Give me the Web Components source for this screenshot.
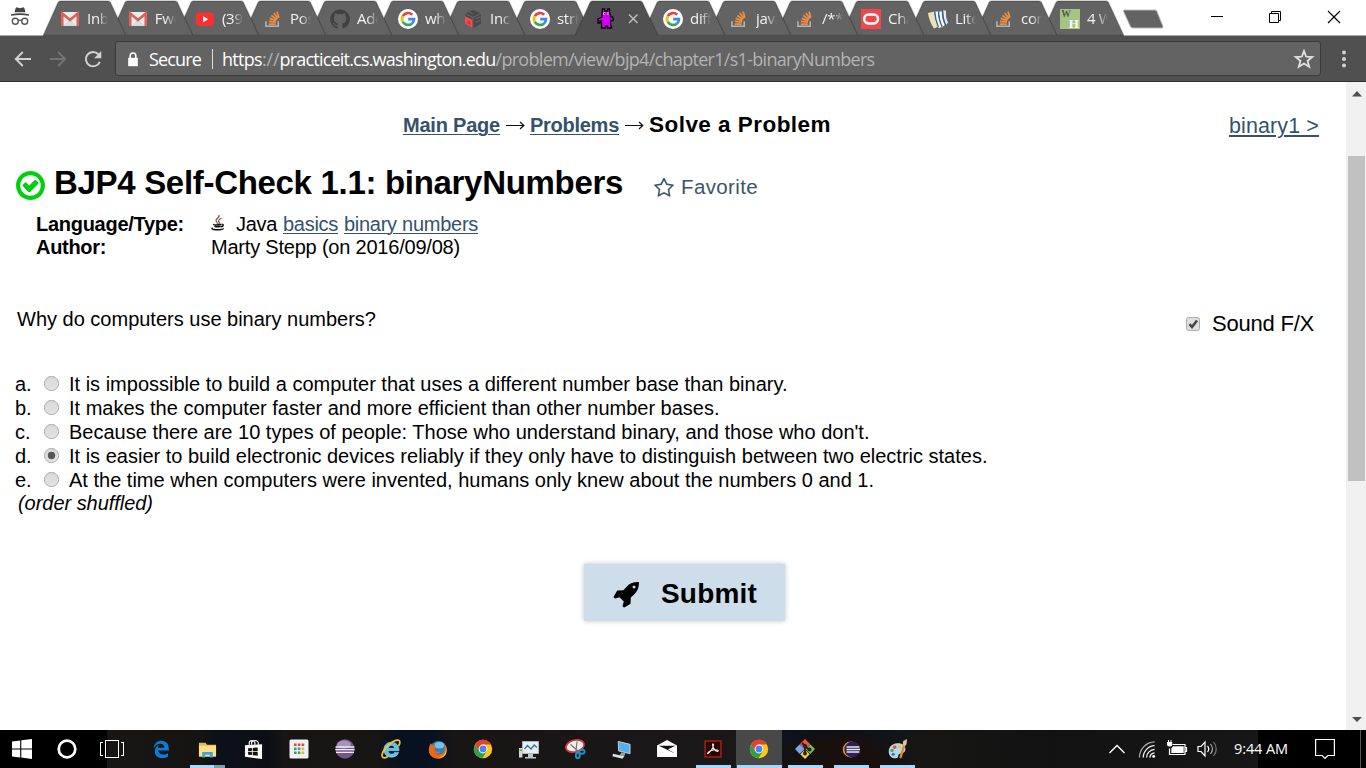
<!DOCTYPE html>
<html lang="en">
<head>
<meta charset="utf-8">
<title>BJP4 Self-Check 1.1: binaryNumbers</title>
<style>
html,body{margin:0;height:100%;overflow:hidden;background:#fff}
</style>
</head>
<body>
<app-screen></app-screen>
<script>
const stack = '<g transform="translate(1.7 2) scale(.82)"><path d="M1.5 12.500V18.500h15V12.500" fill="none" stroke="#b4b4b4" stroke-width="1.900"/><g stroke="#ee8e3f" stroke-width="2.100"><path d="M5 16h8.500M5.200 12.600l8.400 1M6 9l8.100 2.800M8 5.400l7 4.800M11 2.500l5.200 6.500M15 .5l2.300 7.700"/></g></g>';
const google = '<circle cx="10" cy="10" r="10" fill="#fff"/><g fill="none" stroke-width="2.700"><path d="M14.200 5.700A6 6 0 0 0 4.800 7.100" stroke="#ea4335"/><path d="M4.800 7.100a6 6 0 0 0 0 5.800" stroke="#fbbc05"/><path d="M4.800 12.900a6 6 0 0 0 9.200 1.500" stroke="#34a853"/><path d="M14 14.400a6 6 0 0 0 2-4.200h-5.800" stroke="#4285f4"/></g>';
const gmail = '<rect x="1" y="3" width="18" height="14" rx="1.300" fill="#eee"/><path d="M3 17l7-7 7 7z" fill="#ddd"/><path d="M2.300 17V4.500L10 11l7.700-6.500V17" fill="none" stroke="#de5f55" stroke-width="2.500"/>';
const chrome = '<circle cx="10" cy="10" r="9.200" fill="#fbc916"/><path d="M2 5.400A9.200 9.200 0 0 0 9.400 19.200L14 12 6.200 12z" fill="#30a04f"/><path d="M2 5.400A9.200 9.200 0 0 1 18 5.500H10L6 12z" fill="#e34133"/><circle cx="10" cy="10" r="4.400" fill="#fff"/><circle cx="10" cy="10" r="3.400" fill="#4a86ee"/>';
const ICONS = {
  stack, google, gmail, chrome,
  youtube:'<rect x="1" y="3.500" width="18" height="13.500" rx="3.400" fill="#fb3030"/><path d="M8.200 7.200v6l5-3z" fill="#fff"/>',
  github:'<path d="M10 .4A9.800 9.800 0 0 0 6.900 19.500c.5.100.7-.2.700-.5v-1.900c-2.700.6-3.300-1.100-3.300-1.100-.5-1.100-1.100-1.400-1.100-1.400-.9-.6.1-.6.1-.6 1 .1 1.500 1 1.500 1 .9 1.500 2.300 1.100 2.900.8.1-.6.3-1.100.6-1.300-2.200-.3-4.500-1.100-4.500-4.900 0-1.100.4-2 1-2.600-.1-.3-.5-1.300.1-2.700 0 0 .8-.3 2.700 1a9 9 0 0 1 4.900 0c1.900-1.300 2.700-1 2.700-1 .6 1.400.2 2.400.1 2.700.6.6 1 1.500 1 2.600 0 3.800-2.300 4.600-4.500 4.900.4.3.7.9.7 1.800V19c0 .3.2.6.7.5A9.800 9.800 0 0 0 10 .4z" fill="#414141"/>',
  cube:'<path d="M10 .7L18 4.700v10.100L10 19.300 2 14.800V4.700z" fill="#484848"/><path d="M2 7.200l7.500 3.600v8.300L2 14.800z" fill="#ee4b55"/><path d="M2.200 4.800L10 8.600 18 4.600M10 8.800v10.300M6.300 2.900l4 2M12.500 10l5-2.300M12.500 13.200l5-2.300" stroke="#656565" stroke-width="1.100" fill="none"/><path d="M4.500 11.200l3 1.400v3.500l-3-1.700z" fill="#c93944"/>',
  critter:'<path d="M6.500 0h2v2h3V0h2v5h1v3h2l1 3-2 1-1-1v4l1 4h-4v-2h-2v2h-4v-7H4v2H2v-4l4-2V5z" fill="#d600f5" stroke="#0b000d" stroke-width="1.300"/><path d="M7.200 3.500h2v2h-2zM11 3.500h2v2h-2z" fill="#eee"/><path d="M8 4h1v1H8zM11.500 4h1v1h-1z" fill="#000"/>',
  oracle:'<rect width="20" height="20" fill="#ee484e"/><rect x="3.200" y="5.600" width="13.800" height="8.800" rx="4.300" fill="none" stroke="#fff" stroke-width="2.500"/>',
  books:'<path d="M0 4l6.500-1.500Q6.500 9 10.500 17.500L6 19.500Q1 12 0 4z" fill="#eee3b8"/><path d="M7 2.500h3.200q0 7.500 4 15.500L10.500 19Q7 10 7 2.500z" fill="#f4f7fb"/><path d="M10.800 2.500h3q0 7.500 3 13.500l-2.800 2.500Q10.800 10 10.800 2.500z" fill="#fff"/><path d="M15 1.500h3q-.5 8 2 12l-2.500 3Q14.500 9 15 1.500z" fill="#e6eff8"/><path d="M6.800 2.500Q7 10 10.300 18M10.600 2.400q0 8 3.600 15.500M14.600 2q-.2 7 3 14" stroke="#2e5d96" stroke-width="1.300" fill="none"/>',
  wh:'<rect width="20" height="20" fill="#a3c583"/><text x="1.200" y="8.300" font-family="Liberation Serif,serif" font-weight="700" font-size="9.500" fill="#505b49">W</text><text x="8.800" y="18.800" font-family="Liberation Serif,serif" font-weight="700" font-size="13" fill="#fff">H</text>',
  incognito:'<path d="M5.500 1.500l1-1.200 3.500 1 3.500-1 1 1.200 1 3.700H4.500zM1 7.200q9-2 18 0v1.500q-9-1.500-18 0z" fill="#444"/><g fill="none" stroke="#555" stroke-width="1.400"><circle cx="5.300" cy="14.300" r="3"/><circle cx="14.700" cy="14.300" r="3"/><path d="M8.200 13.600q1.800-1 3.600 0"/></g>',
  back:'<path d="M18 10H3M9.800 3l-7 7 7 7" fill="none" stroke="#d2d2d2" stroke-width="1.900"/>',
  fwd:'<path d="M2 10H17M10.200 3l7 7-7 7" fill="none" stroke="#747474" stroke-width="1.900"/>',
  reload:'<path d="M16.800 12.800A7.200 7.200 0 1 1 15.400 5.200l1.200 1.500" fill="none" stroke="#d2d2d2" stroke-width="2"/><path d="M18.300 2v7.200h-7.200z" fill="#d2d2d2"/>',
  lock:'<path d="M4 8.500h12V19H4z" fill="#fff"/><path d="M6.500 9V6a3.500 3.500 0 0 1 7 0v3" fill="none" stroke="#fff" stroke-width="2"/>',
  mark:'<path d="M10 2l2.200 5.700 6.100.300-4.700 3.900 1.600 5.900L10 14.500l-5.200 3.300 1.600-5.900L1.700 8l6.100-.300z" fill="none" stroke="#e2e2e2" stroke-width="1.800"/>',
  dots:'<g fill="#d2d2d2"><circle cx="10" cy="3.600" r="2"/><circle cx="10" cy="10" r="2"/><circle cx="10" cy="16.400" r="2"/></g>',
  min:'<path d="M4 9.500h12" stroke="#000"/>',
  max:'<path d="M4.500 6.500h9v9h-9zM6.500 6.500v-2h9v9h-2" fill="none" stroke="#000"/>',
  close:'<path d="M4 4l12 12M16 4L4 16" stroke="#000" stroke-width="1.200"/>',
  tabx:'<path d="M6 5.500l8.500 8.500M14.500 5.500L6 14" stroke="#bcbcbc" stroke-width="1.500"/>',
  java:'<path d="M11 0c2 3-4 4.500-3.500 7 .2 1.500 2.500 2.500 1.500 4M14.500 4c-4 1.500-4.500 3.500-3 5 1 1 0 2-1 2.500" fill="none" stroke="#75584a" stroke-width="1.500"/><path d="M5 11.500c-1.500 1 3 1.300 9 .3M5.500 14.200q4 1.200 8 0M14.500 11.800c3-.8 2.500 2.700-.7 3M3.500 16.300c-3.500 1.500 3.500 2.700 9 2 3-.3 4.500-1 3.500-1.600" fill="none" stroke="#111" stroke-width="1.900"/>',
  win:'<path d="M0 2.600l8.200-1.100v8H0zM9.300 1.300L20 0v9.500H9.300zM0 10.500h8.200v8L0 17.400zM9.300 10.500H20V20L9.300 18.600z" fill="#fff"/>',
  cortana:'<circle cx="10" cy="10" r="8.300" fill="none" stroke="#fff" stroke-width="2.700"/>',
  edge:'<path d="M1.500 9.300C2.500 3.500 6 .8 10.500.8c5.600 0 8.200 4 8.200 9v1.900H6.800c.2 3 2.800 4.400 5.800 4.400 2 0 3.900-.6 5.200-1.500v4c-1.700 1-3.800 1.500-6.300 1.500-5.400 0-8.400-3.200-8.400-7.400 0-3.300 1.800-5.900 4.500-7.200-.7 1-1 2.300-1 3h7.200c0-2.500-1.400-4.400-4.400-4.400-3.300 0-6 2-7.900 5.200z" fill="#0a7cda"/>',
  folder:'<path d="M1 3h7l1.500 2H19v12H1z" fill="#e9b94f"/><path d="M1 6h18v11.500H1z" fill="#ffe08a"/><path d="M4.500 18.500v-6h11v6h-3v-3h-5v3z" fill="#3fa4dd"/>',
  store:'<path d="M1 5.500L19 4.500V20L1 17.700z" fill="#fff"/><path d="M5.500 6V3a3 2.300 0 0 1 6 0v2M8 5V3a3.500 2.500 0 0 1 7 0v2" fill="none" stroke="#fff" stroke-width="1.200"/><path d="M4.300 8.800l4-.4v3.500h-4zM9.200 8.300l5.200-.5v4.100H9.200zM4.300 12.700h4v3.200l-4-.4zM9.200 12.700h5.200v3.900l-5.200-.6z" fill="#111"/>',
  apps:'<rect x=".5" y=".5" width="19" height="19" rx="1.500" fill="#f1f1f1"/><path d="M5 4.500h2.600v2.600H5zM8.800 4.500h2.600v2.600H8.800zM12.600 4.500h2.600v2.600h-2.600z" fill="#e44a3c"/><path d="M5 8.500h2.600v2.600H5z" fill="#38a753"/><path d="M8.800 8.500h2.600v2.600H8.800z" fill="#4585ee"/><path d="M12.600 8.500h2.600v2.600h-2.600z" fill="#f5b915"/><path d="M5 12.500h2.600v2.600H5zM8.800 12.500h2.600v2.600H8.800z" fill="#38a753"/><path d="M12.600 12.500h2.600v2.600h-2.600z" fill="#f5b915"/>',
  eclipse:'<circle cx="10" cy="10" r="9.700" fill="#70568d"/><ellipse cx="9" cy="5.500" rx="7" ry="4" fill="#a793bb"/><path d="M.6 8h18.800M.4 10.700h19.200M1 13.400h18" stroke="#f2eef5" stroke-width="1.300"/>',
  eclipse2:'<circle cx="9" cy="10" r="9.300" fill="#e88b28"/><circle cx="11" cy="10" r="9.300" fill="#2c2157"/><path d="M4.200 7h15M4 10h16M4.200 13h15" stroke="#e9e7f2" stroke-width="1.900"/>',
  ie:'<path d="M10.300 3.200c-4.600 0-7.400 3.300-7.400 7.500s3 7.500 7.700 7.500c3.500 0 6-1.800 7-4.800h-4c-.5 1-1.500 1.700-2.900 1.700-2.200 0-3.500-1.300-3.600-3.400H18c.3-5-2.700-8.500-7.700-8.500zM7.200 9.200c.3-1.700 1.500-2.800 3.300-2.800s3 1 3.200 2.800z" fill="#55c5ef" stroke="#b8e9fb" stroke-width=".5"/><path d="M17.500 7C20 3 19 .7 16 1.200 10 2.500-.5 12 1.300 17.600c.7 2 3.500 1.300 5.700 0" fill="none" stroke="#f5c426" stroke-width="1.700"/>',
  firefox:'<circle cx="11" cy="9.500" r="8.500" fill="#2d7fc4"/><ellipse cx="12" cy="5.500" rx="5" ry="3.500" fill="#70c4e8"/><path d="M2.500 3.500L5 5.500 7.500 5c-2 2 .8 2.200 1.200 3-2 1.200-2 2-.7 3.500 1.500 1.800 4 .3 5 .7 0 2-3 3-5.500 2 3 3 9 1 10-3.500.7-3-.2-5.500-1.300-7.500 5.500 5 4 13.500-2.400 16C7 21.500.3 16.500.8 10 1 7 2.200 6 2.500 3.500z" fill="#e86a18"/><path d="M18 5c2.600 6-.5 12.500-7 13.500 7.500 1.500 11-7 7-13.500z" fill="#fbc12d"/>',
  monitor:'<path d="M3.500 2.500h16v12h-16z" fill="#e9eef0" stroke="#aeb6ba"/><path d="M5.500 10l3-3.500 3.500 3.500 3.300-4 2.700 2.500" fill="none" stroke="#257ba6" stroke-width="1.300"/><path d="M9 15h5v3h3v1.500H6V18h3z" fill="#bfc6c9"/><path d="M0 9h3.400v9.500H0z" fill="#d5d5d5"/><path d="M.6 10.500H3v1.500H.6z" fill="#44c735"/>',
  snip:'<ellipse cx="10" cy="7" rx="9.300" ry="5.900" transform="rotate(-14 10 7)" fill="#eee" stroke="#d93a3f" stroke-width="1.700"/><path d="M5.500 5.500l8 7M12 2.500l-1 9.500" stroke="#777" stroke-width="1.200"/><g fill="none" stroke="#1f91c2" stroke-width="1.900"><ellipse cx="17" cy="12.700" rx="2.600" ry="2"/><ellipse cx="12.800" cy="16.500" rx="2" ry="2.700"/></g>',
  remote:'<path d="M6.500 1.500L19 4.500v10L7 11.500z" fill="#55b0ea" stroke="#d9dddf" stroke-width=".9"/><path d="M10 13l4 1-1 3-5-1z" fill="#9ba2a6"/><path d="M1 14.500l12 2.500-2 2.700-10.500-2.500z" fill="#dfe2e4"/>',
  mail:'<path d="M0 6.500L10 1l10 5.500V18H0z" fill="#fff"/><path d="M1.800 6.800h16.700L11 10.300l7 4.200z" fill="#111"/>',
  acrobat:'<path d="M1.200 1.200h17.600v17.600H1.200z" fill="#290300" stroke="#a41e15" stroke-width="1.700"/><path d="M9.500 4.500c2.500-1 .5 6.500-5 10.500-1.700 1 .3-3 6-4 5-.7 6.300 1 4.800 1.700-2 .5-6-3.700-5.800-8.200z" fill="none" stroke="#eee" stroke-width="1.200"/>',
  git:'<path d="M10 0l5.300 5.300L10 10.500 4.700 5.300z" fill="#ee5449"/><path d="M4.500 5.500L9.700 10l-5 5L0 10z" fill="#79a8e8"/><path d="M15.500 5.500L20 10l-4.700 5L10.300 10z" fill="#6cc344"/><path d="M10 10.500l4.700 4.700L10 20l-4.700-4.800z" fill="#f3d443"/><path d="M7 4l3 3v8M10 7l4 3.500" stroke="#282321" stroke-width="2" fill="none"/><g fill="#282321"><circle cx="10" cy="7" r="2"/><circle cx="10" cy="14.500" r="2"/><circle cx="14.500" cy="10.500" r="2"/></g>',
  paint:'<path d="M9.500 3.500C4 4 .5 8 .8 12.500c.2 5 4.500 7.500 8.500 6.500 2.500-.8.500-3.500 3-4.500 2.700-.8 5.500-.5 6-4.500.3-4.500-4-7-8.800-6.500z" fill="#b7d8e6"/><circle cx="7" cy="7.500" r="1.900" fill="#e55335"/><circle cx="4.200" cy="11" r="1.700" fill="#47a84c"/><circle cx="5.500" cy="15" r="1.700" fill="#3b72c3"/><circle cx="12" cy="7" r="1.700" fill="#f0c536"/><path d="M17.500 4L13 19" stroke="#d98a30" stroke-width="2.400"/><path d="M15.500 5l.5-4 4-2-.5 5.500-2 2z" fill="#e5c391"/>',
  caret:'<path d="M2.500 14L10 6.500l7.500 7.500" fill="none" stroke="#fff" stroke-width="1.400"/>',
  wifi:'<g fill="none" stroke="#aaa" stroke-width="1.400"><path d="M1.500 18.500A16.500 16.500 0 0 1 17.500 2"/><path d="M5.500 18.500A12.500 12.500 0 0 1 17.500 6" stroke="#eee"/><path d="M9 18.500a9 9 0 0 1 8.500-8.700" stroke="#eee"/><path d="M12.500 18.500a5.500 5.500 0 0 1 5-5" stroke="#eee"/></g><circle cx="16.500" cy="17.300" r="1.500" fill="#fff"/>',
  battery:'<path d="M5.500 5.500h12.500v10H2.500V9.500M18 8.500h1.500v4H18" fill="none" stroke="#fff" stroke-width="1.200"/><path d="M6 7.200h10.700v6.800H4.300V9.500z" fill="#fff"/><path d="M0 3h5.200v2.500q0 2-2 2h-1Q0 7.500 0 5.500zM1 1h1v2H1zM3.500 1h1v2h-1z" fill="#fff"/>',
  volume:'<path d="M1 7.500h3l4-4.500v14L4 12.500H1z" fill="none" stroke="#fff" stroke-width="1.200"/><g fill="none" stroke-width="1.200"><path d="M10.500 7q2.500 3 0 6" stroke="#fff"/><path d="M13.500 5q4 5 0 10" stroke="#aaa"/><path d="M16.500 3q5.500 7 0 14" stroke="#777"/></g>',
  action:'<path d="M.6 .5h18.800v16h-6.500L10 19.300 7.200 16.500H.6z" fill="none" stroke="#fff" stroke-width="1.200"/>'
};

class UiIcon extends HTMLElement{
  connectedCallback(){
    const s=+this.getAttribute('size')||20;
    this.attachShadow({mode:'open'}).innerHTML=`<style>:host{display:block;flex:none;width:${s}px;height:${s}px}svg{display:block;overflow:visible}</style><svg width="${s}" height="${s}" viewBox="0 0 20 20">${ICONS[this.getAttribute('name')]}</svg>`;
  }
}
customElements.define('ui-icon',UiIcon);

/* Text that spreads its letters evenly over a given width. */
class FitText extends HTMLElement{
  connectedCallback(){
    this.attachShadow({mode:'open'}).innerHTML='<style>:host{display:inline-block;white-space:pre;flex:none}span{display:inline-block;text-decoration:inherit}</style><span><slot></slot></span>';
    const span=this.shadowRoot.querySelector('span');
    const w=+this.getAttribute('w');
    const d=w-span.getBoundingClientRect().width;
    span.style.letterSpacing=(d/this.textContent.length)+'px';
    this.style.width=w+'px';
  }
}

class BrowserTab extends HTMLElement{
  connectedCallback(){
    const on=this.hasAttribute('active');
    this.attachShadow({mode:'open'}).innerHTML=`<style>
    :host{display:grid;width:83px;height:36px;flex:none;margin-right:-16.500px;position:relative;font:15px "Open Sans","Noto Sans",sans-serif;letter-spacing:-.3px;color:#f3f3f3}
    svg{grid-area:1/1;display:block}
    .in{grid-area:1/1;display:flex;align-items:flex-start;gap:7px;padding-top:9px;padding-left:var(--inset)}
    .t{width:21px;overflow:hidden;white-space:nowrap;line-height:18px;height:20px;-webkit-mask-image:linear-gradient(90deg,#000 50%,transparent)}
    </style><svg width="83" height="36" viewBox="0 0 83 36"><path d="M0 36L15 2.500Q15.700 1 17.500 1H65Q66.800 1 67.500 2.500L83 36Z" fill="${on?'#505050':'#636363'}"/><path d="M0 35.500L15 2.500Q15.700 1 17.500 1H65Q66.800 1 67.500 2.500L83 35.500${on?'':'Z'}" fill="none" stroke="rgba(0,0,0,.22)" stroke-width="1.300"/></svg>
    <div class="in"><ui-icon name="${this.getAttribute('icon')}"></ui-icon>${on?'<ui-icon name="tabx"></ui-icon>':'<div class="t"><slot></slot></div>'}</div>`;
  }
}
customElements.define('browser-tab',BrowserTab);

class TabStrip extends HTMLElement{
  connectedCallback(){
    const tabs=[['gmail','Inbox',70],['gmail','Fwd:',137.7],['youtube','(39)',205],['stack','Post',273],['github','Add',340],['google','why',408],['cube','Incl',473],['google','strin',540],['critter','',606],['google','diffe',673],['stack','java',739],['stack','/** *',805],['oracle','Cha',871],['books','Lite',938],['stack','com',1004],['wh','4 W',1070]];
    this.attachShadow({mode:'open'}).innerHTML=`<style>
    :host{display:flex;height:36px;background:#fff;box-shadow:inset 0 -1px #aaa}
    .inc{padding:7px 0 0 9.500px}
    .tabs{display:flex;width:1081px}
    .new{margin:9px 0 0 -2px}
    .win{display:flex;margin-left:auto;padding:7px 22px 0 0;gap:38px}
    </style><ui-icon class="inc" style="width:33.500px" name="incognito"></ui-icon><div class="tabs">${tabs.map(([i,t,c],n)=>`<browser-tab icon="${i}" ${t?'':'active'} style="z-index:${t?20-n:30};--inset:${c-10-43-66.5*n}px">${t}</browser-tab>`).join('')}</div>
    <svg class="new" width="42" height="21" viewBox="0 0 42 21"><path d="M2.500 1h30.500q1.500 0 2 1.500l6 15q.5 1.500-1 1.500H11q-2 0-2.600-1.500L1.500 2.500Q1 1 2.500 1z" fill="#636363" stroke="#bbb"/></svg>
    <div class="win"><ui-icon name="min" style="margin-right:-1px;position:relative;left:-1px"></ui-icon><ui-icon name="max" style="margin:0 1px 0 0"></ui-icon><ui-icon name="close"></ui-icon></div>`;
  }
}
customElements.define('tab-strip',TabStrip);
customElements.define('fit-text',FitText);

class AddressBar extends HTMLElement{
  connectedCallback(){
    this.attachShadow({mode:'open'}).innerHTML=`<style>
    :host{display:flex;align-items:center;box-sizing:border-box;height:46px;background:#505050;border-bottom:1px solid #2f2f2f;padding:0 12px 0 13px;font:18px/34px "Open Sans","Noto Sans",sans-serif;color:#fff}
    .nav{display:flex;gap:15px;width:102px}
    .box{display:flex;align-items:center;box-sizing:border-box;width:1206px;height:35px;border:1px solid #3b3b3b;border-radius:3px;background:#636363;padding:0 6px 0 9px}
    .sep{width:1px;height:20px;background:#ddd;margin:0 9px 0 11px}
    .secure{margin-left:8px}
    .dim{color:#b2b2b2}
    .mark{margin-left:auto}
    .menu{margin-left:13px}
    </style><div class="nav"><ui-icon name="back"></ui-icon><ui-icon name="fwd"></ui-icon><ui-icon name="reload"></ui-icon></div>
    <div class="box"><ui-icon name="lock" size="16"></ui-icon><fit-text class="secure" w="52">Secure</fit-text><span class="sep"></span><fit-text w="40">https</fit-text><fit-text class="dim" w="17.500">://</fit-text><fit-text w="216">practiceit.cs.washington.edu</fit-text><fit-text class="dim" w="379">/problem/view/bjp4/chapter1/s1-binaryNumbers</fit-text><ui-icon class="mark" name="mark"></ui-icon></div><ui-icon class="menu" name="dots"></ui-icon>`;
  }
}
customElements.define('address-bar',AddressBar);

class ScrollBar extends HTMLElement{
  connectedCallback(){
    this.attachShadow({mode:'open'}).innerHTML=`<style>
    :host{display:flex;flex-direction:column;align-items:center;box-sizing:border-box;width:20px;background:#f1f1f1;padding:9px 0 8px}
    i{width:17px;height:325px;background:#c1c1c1;margin:59px 0 auto 1px}svg{display:block;margin-left:1px}
    </style><svg width="10" height="6"><path d="M0 5.500L5 0l5 5.500z" fill="#505050"/></svg><i></i><svg width="10" height="5"><path d="M0 0h10L5 5z" fill="#505050"/></svg>`;
  }
}
customElements.define('scroll-bar',ScrollBar);

class AnswerOption extends HTMLElement{
  connectedCallback(){
    const on=this.hasAttribute('checked');
    this.attachShadow({mode:'open'}).innerHTML=`<style>
    :host{display:flex;height:24px;line-height:24px}
    b{font-weight:400;width:28.500px}
    svg{margin:3.500px 9.500px 0 0;flex:none}
    </style><b>${this.getAttribute('key')}.</b><svg width="16" height="16"><defs><linearGradient id="g" x2="0" y2="1"><stop stop-color="#d8d8d8"/><stop offset="1" stop-color="#e4e4e4"/></linearGradient></defs><circle cx="7.500" cy="7.500" r="7.100" fill="url(#g)" stroke="#adadad"/>${on?'<circle cx="7.500" cy="7.500" r="3.700" fill="#555"/>':''}</svg><fit-text w="${this.getAttribute('w')}">${this.textContent}</fit-text>`;
  }
}
customElements.define('answer-option',AnswerOption);

class ProblemPage extends HTMLElement{
  connectedCallback(){
    const star='<svg width="20" height="20" viewBox="0 64 1664 1664"><path fill="#3a5468" d="M1137 1004l306-297-422-62-189-382-189 382-422 62 306 297-73 421 378-199 377 199zm527-357q0 22-26 48l-363 354 86 500q1 7 1 20 0 50-41 50-19 0-40-12l-449-236-449 236q-22 12-40 12-21 0-31.500-14.500t-10.500-35.500q0-6 2-20l86-500-364-354q-25-27-25-48 0-37 56-46l502-73 225-455q19-41 49-41t49 41l225 455 502 73q56 9 56 46z"/></svg>';
    const arrow='<svg class="arrow" width="20" height="14"><path d="M0 7.500h17.500M14 4l3.800 3.500L14 11" fill="none" stroke="#111" stroke-width="1.200"/></svg>';
    this.attachShadow({mode:'open'}).innerHTML=`<style>
    :host{display:block;box-sizing:border-box;flex:1;background:#fff;color:#000;font:20px/24px "Liberation Sans",Arial,sans-serif;padding-top:31px}
    .row{display:flex}
    .crumbs{height:24px;align-items:baseline;padding-left:403px}
    .crumbs b{color:#2f4f66}
    .link{color:#34536b;text-decoration:underline 1px;text-underline-offset:2px}
    .arrow{margin:0 4px 0 6px;width:20px;align-self:flex-start;padding-top:5px}
    svg{display:block;flex:none}
    .here{font-size:22.500px;font-weight:700}
    .next{margin-left:auto;margin-right:27px;font-size:21.500px;text-decoration-thickness:2px;position:relative;top:1px}
    .title{margin-top:28px;height:36px;padding-left:16px;align-items:flex-start}
    h1{margin:0 31px 0 9px;font-size:33px;line-height:36px;height:36px}
    .title svg{margin-top:6px}
    .fav{display:flex;gap:7px;color:#3a5468;padding-top:10px;font-size:20.500px}
    .title .fav svg{margin-top:3px}
    .meta{display:grid;grid-template-columns:175px auto;grid-auto-rows:23px;justify-content:start;padding-left:36px;margin-top:11px;line-height:24px}
    .lang{display:flex}
    .ask{padding-left:17px;margin-top:49px;justify-content:space-between}
    .fx{display:flex;font-size:22px;padding:5px 32px 0 0}
    .fx svg{margin:5px 12px 0 0}
    .list{padding:36px 0 0 15px}
    .note{padding-left:18px;height:24px;font-style:italic;line-height:22px}
    .btn{display:flex;box-sizing:border-box;width:201px;height:57px;margin:48px 0 0 584px;padding-left:29px;background:#cddde9;box-shadow:0 0 5px rgba(0,0,0,.25);font-weight:700;font-size:28px;line-height:59px}
    .btn svg{margin:18px 22px 0 0}
    </style>
    <div class="row crumbs"><b><fit-text class="link" w="97">Main Page</fit-text></b>${arrow}<b><fit-text class="link" w="89">Problems</fit-text></b>${arrow}<fit-text class="here" w="182">Solve a Problem</fit-text><fit-text class="next link" w="90">binary1 &gt;</fit-text></div>
    <div class="row title"><svg width="29" height="29" viewBox="128 128 1536 1536"><path fill="#00cf0c" d="M1299 813l-422 422q-19 19-45 19t-45-19l-294-294q-19-19-19-45t19-45l102-102q19-19 45-19t45 19l147 147 275-275q19-19 45-19t45 19l102 102q19 19 19 45t-19 45zm141 83q0-148-73-273t-198-198-273-73-273 73-198 198-73 273 73 273 198 198 273 73 273-73 198-198 73-273zm224 0q0 209-103 385.500t-279.500 279.500-385.500 103-385.500-103-279.500-279.500-103-385.500 103-385.500 279.500-279.500 385.500-103 385.500 103 279.500 279.500 103 385.500z"/></svg><h1><fit-text w="569">BJP4 Self-Check 1.1: binaryNumbers</fit-text></h1><div class="fav">${star}<fit-text w="77">Favorite</fit-text></div></div>
    <div class="meta"><b><fit-text w="148">Language/Type:</fit-text></b><div class="lang"><ui-icon name="java" size="16" style="margin:3px 10px 0 -1px"></ui-icon><fit-text w="41">Java</fit-text><fit-text class="link" w="55" style="margin:0 6px 0 6px">basics</fit-text><fit-text class="link" w="134">binary numbers</fit-text></div><b><fit-text w="70">Author:</fit-text></b><fit-text w="249">Marty Stepp (on 2016/09/08)</fit-text></div>
    <div class="row ask"><fit-text w="359">Why do computers use binary numbers?</fit-text><div class="fx"><svg width="14" height="14"><rect x=".5" y=".5" width="13" height="13" rx="2" fill="#dedede" stroke="#adadad"/><path d="M3.500 7.200l2.500 2.800L11 3.500" fill="none" stroke="#444" stroke-width="2.500"/></svg><fit-text w="102">Sound F/X</fit-text></div></div>
    <div class="list"><answer-option key="a" w="718.500">It is impossible to build a computer that uses a different number base than binary.</answer-option><answer-option key="b" w="650.500">It makes the computer faster and more efficient than other number bases.</answer-option><answer-option key="c" w="800.500">Because there are 10 types of people: Those who understand binary, and those who don't.</answer-option><answer-option key="d" w="918.500" checked>It is easier to build electronic devices reliably if they only have to distinguish between two electric states.</answer-option><answer-option key="e" w="805">At the time when computers were invented, humans only knew about the numbers 0 and 1.</answer-option></div>
    <div class="note"><fit-text w="135">(order shuffled)</fit-text></div>
    <div class="btn"><svg width="26" height="26" viewBox="0 128 1664 1664"><path d="M1440 448q0-40-28-68t-68-28-68 28-28 68 28 68 68 28 68-28 28-68zm224-288q0 249-75.500 430.500t-253.500 360.500q-81 80-195 176l-20 379q-2 16-16 26l-384 224q-7 4-16 4-12 0-23-9l-64-64q-13-14-8-32l85-276-281-281-276 85q-3 1-9 1-14 0-23-9l-64-64q-17-19-5-39l224-384q10-14 26-16l379-20q96-114 176-195 188-187 358-258t431-71q14 0 24 9.500t10 22.500z"/></svg><fit-text w="96">Submit</fit-text></div>`;
  }
}
customElements.define('problem-page',ProblemPage);

class TaskBar extends HTMLElement{
  connectedCallback(){
    const apps=[['edge',18],['folder',19,'split'],['store',19],['apps',20],['eclipse',20],['ie',20],['firefox',19],['chrome',20],['monitor',20],['snip',20],['remote',19],['mail',20],['acrobat',18,'run'],['chrome',20,'run on'],['git',20,'run'],['eclipse2',17,'run'],['paint',19,'run']];
    this.attachShadow({mode:'open'}).innerHTML=`<style>
    :host{display:flex;height:38px;color:#fff;font:14.500px/38px "Open Sans","Noto Sans",sans-serif;overflow:hidden;background:
      radial-gradient(ellipse 75px 45px at 838px 38px,#18100d 60%,transparent 100%),
      radial-gradient(ellipse 90px 70px at 830px 10px,#0b1320 40%,transparent 100%),
      radial-gradient(ellipse 40px 60px at 415px 15px,#08111f 40%,transparent 100%),
      linear-gradient(90deg,#000 107px,#171615 107px,#151413 200px,#0c1018 215px,#0b0e15 268px,#171514 285px,#191717 700px,#171615 930px,#121212 1050px,#171717 1258px,#000 1258px)}
    .cell{display:grid;place-items:center;width:46px;flex:none;height:38px}
    .sys{width:45px;box-sizing:border-box;padding-right:1px}
    .tv{width:24px;height:20px;display:flex;gap:2px}
    .tv i{box-sizing:border-box;border:1px solid #fff;height:14px;width:3px;margin-top:3px}
    .tv i:first-child{border-right:0}.tv i:last-child{border-left:0}
    .tv i:nth-child(2){width:16px;height:18px;margin-top:1px}
    .apps{display:flex;padding-left:3px}
    .run{background:linear-gradient(#a9d7fb,#a9d7fb) center bottom/35px 3px no-repeat}
    .on{background:linear-gradient(#a9d7fb,#a9d7fb) center bottom/45px 3px no-repeat,#484848}
    .split{background:linear-gradient(90deg,#a9d7fb 24px,#7d9db7 24px) center bottom/35px 3px no-repeat}
    .tray{display:flex;align-items:center;margin-left:auto}
    .clock{margin:0 20px 0 17px}
    .desk{width:1px;height:38px;background:#555;margin:0 5px 0 25px}
    </style><div class="cell sys"><ui-icon name="win"></ui-icon></div><div class="cell sys"><ui-icon name="cortana"></ui-icon></div><div class="cell sys"><div class="tv"><i></i><i></i><i></i></div></div>
    <div class="apps">${apps.map(([n,s,c])=>`<div class="cell ${c||''}"><ui-icon name="${n}" size="${s}"></ui-icon></div>`).join('')}</div>
    <div class="tray"><ui-icon name="caret"></ui-icon><ui-icon name="wifi" size="19" style="margin:0 10px 0 11px"></ui-icon><ui-icon name="battery"></ui-icon><ui-icon name="volume" style="margin-left:10px"></ui-icon><fit-text class="clock" w="54">9:44 AM</fit-text><ui-icon name="action" style="margin-left:7px"></ui-icon><span class="desk"></span></div>`;
  }
}
customElements.define('task-bar',TaskBar);

class AppScreen extends HTMLElement{
  connectedCallback(){
    this.attachShadow({mode:'open'}).innerHTML=`<style>:host{display:flex;flex-direction:column;width:1366px;height:768px}main{display:flex;flex:1;min-height:0}</style><tab-strip></tab-strip><address-bar></address-bar><main><problem-page></problem-page><scroll-bar></scroll-bar></main><task-bar></task-bar>`;
  }
}
customElements.define('app-screen',AppScreen);
</script>
</body>
</html>
